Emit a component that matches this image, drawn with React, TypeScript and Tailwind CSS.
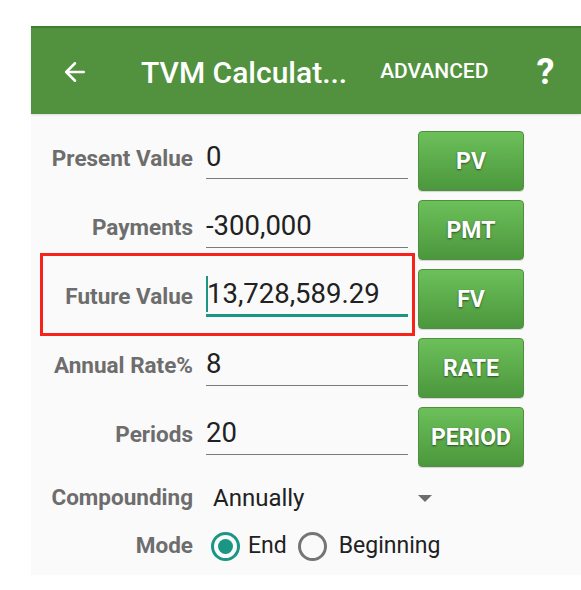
import { ArrowLeft } from 'lucide-react';

type Row = {
  label: string;
  value: string;
  button: string;
  focused?: boolean;
};

const rows: Row[] = [
  { label: 'Present Value', value: '0', button: 'PV' },
  { label: 'Payments', value: '-300,000', button: 'PMT' },
  { label: 'Future Value', value: '13,728,589.29', button: 'FV', focused: true },
  { label: 'Annual Rate%', value: '8', button: 'RATE' },
  { label: 'Periods', value: '20', button: 'PERIOD' },
];

const CalcButton = ({ text }: { text: string }) => (
  <button className="w-[106px] h-[60px] pt-[2px] rounded-[4px] border border-[#4f8f3f] bg-gradient-to-b from-[#6cc05a] to-[#4c973d] text-white text-[23px] font-bold [text-shadow:0_1px_2px_rgba(0,0,0,0.55)] shadow-[0_1px_1px_rgba(0,0,0,0.15)]">
    {text}
  </button>
);

export default function App() {
  return (
    <div className="w-[581px] h-[590px] bg-white pt-[26px] pl-[31px] font-['Roboto',sans-serif]">
      <main className="w-[550px] h-[549px] bg-[#fafafa] flex flex-col">
        <header className="h-[88px] pt-[2px] bg-[#52923f] border-t-2 border-[#3f7d31] flex items-center text-white shadow-[0_1px_2px_rgba(0,0,0,0.12)]">
          <ArrowLeft className="ml-[29px] w-[30px] h-[30px]" strokeWidth={2} />
          <h1 className="ml-[51px] text-[30px] font-medium">TVM Calculat...</h1>
          <span className="ml-[33px] text-[21px] font-medium">ADVANCED</span>
          <span className="ml-[48px] text-[36px] font-bold">?</span>
        </header>

        <section className="pt-[17px] flex flex-col gap-[9px]">
          {rows.map((row) => (
            <div key={row.label} className="relative h-[60px] flex">
              <div className="w-[162px] h-[48px] pt-[8px] flex items-center justify-end text-[22.5px] font-bold text-[#6d6d6d]">
                {row.label}
              </div>
              <div
                className={
                  row.focused
                    ? 'ml-[13px] w-[202px] h-[48px] pt-[5px] flex items-center border-b-[3px] border-[#1b9584] text-[27.5px] text-[#212121]'
                    : 'ml-[13px] w-[202px] h-[48px] pt-[5px] flex items-center border-b-[1.5px] border-[#7a7a7a] text-[27.5px] text-[#212121]'
                }
              >
                {row.focused && <span className="w-[2px] h-[36px] bg-[#1b9584] mr-[-1px]" />}
                {row.value}
              </div>
              <div className="ml-[10px]">
                <CalcButton text={row.button} />
              </div>
              {row.focused && (
                <div className="absolute left-[9px] top-[-16px] w-[375px] h-[83px] border-[3px] border-[#f5231a]" />
              )}
            </div>
          ))}
        </section>

        <div className="mt-[15px] h-[30px] pt-[2px] flex items-center">
          <div className="w-[162px] text-right text-[22.5px] font-bold text-[#6d6d6d]">Compounding</div>
          <div className="ml-[20px] w-[205px] text-[24px] text-[#212121]">Annually</div>
          <span className="w-0 h-0 border-l-[7px] border-r-[7px] border-t-[7px] border-l-transparent border-r-transparent border-t-[#6d6d6d]" />
        </div>

        <div className="mt-[19px] h-[30px] flex items-center">
          <div className="w-[162px] text-right text-[22.5px] font-bold text-[#6d6d6d]">Mode</div>
          <span className="ml-[18px] w-[29px] h-[29px] rounded-full border-[3px] border-[#1b9584] flex items-center justify-center">
            <span className="w-[15px] h-[15px] rounded-full bg-[#1b9584]" />
          </span>
          <span className="ml-[8px] text-[23px] text-[#212121]">End</span>
          <span className="ml-[11px] w-[29px] h-[29px] rounded-full border-[3px] border-[#757575]" />
          <span className="ml-[12px] text-[23px] text-[#212121]">Beginning</span>
        </div>
      </main>
    </div>
  );
}
